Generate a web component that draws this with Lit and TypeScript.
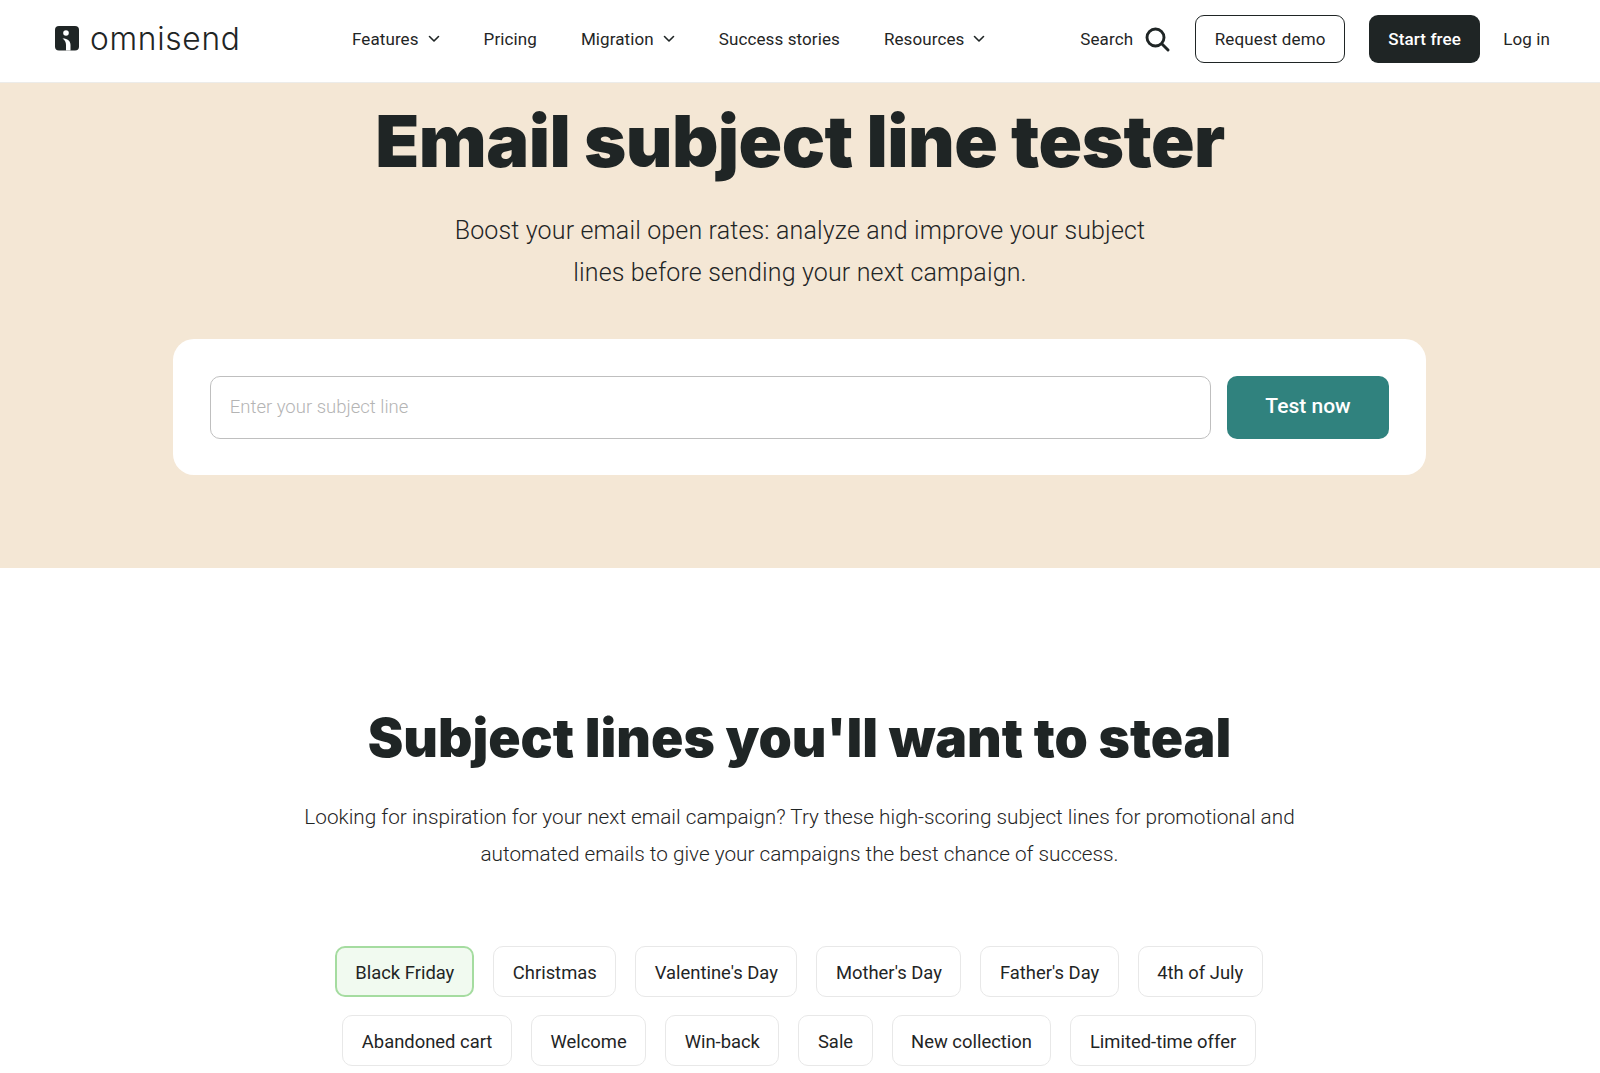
import { LitElement, html, css } from "lit";
import { customElement } from "lit/decorators.js";

const chevron = html`<svg class="chev" width="12" height="8" viewBox="0 0 12 8" fill="none"><path d="M1.500 1.500 6 6l4.500-4.500" stroke="#1f2525" stroke-width="1.600" stroke-linecap="round" stroke-linejoin="round"/></svg>`;

const row1 = ["Christmas", "Valentine's Day", "Mother's Day", "Father's Day", "4th of July"];
const row2 = ["Abandoned cart", "Welcome", "Win-back", "Sale", "New collection", "Limited-time offer"];

@customElement("app-root")
export class AppRoot extends LitElement {
  static styles = css`
    :host { display: block; height: 1073px; overflow: hidden; background: #fff; color: #1f2525; font-family: Roboto, "Liberation Sans", sans-serif; }
    * { box-sizing: border-box; }
    header { height: 83px; display: flex; align-items: center; border-bottom: 1px solid #ececea; background: #fff; padding: 0 50px 5px 55px; }
    .logo { display: flex; align-items: center; gap: 10px; width: 297px; }
    .logo span { font-family: Inter, sans-serif; font-weight: 300; font-size: 31.700px; letter-spacing: 0.700px; line-height: 1; }
    nav { display: flex; align-items: center; gap: 44px; font-size: 17px; letter-spacing: 0.100px; }
    nav a { display: flex; align-items: center; gap: 9px; }
    .right { margin-left: auto; display: flex; align-items: center; font-size: 17px; letter-spacing: 0.120px; }
    .search { display: flex; align-items: center; gap: 11px; margin-right: 25px; }
    .btn { height: 48px; border-radius: 9px; display: flex; align-items: center; justify-content: center; font-weight: 500; }
    .demo { width: 150px; border: 1px solid #1f2525; margin-right: 24px; font-weight: 400; }
    .free { width: 111px; background: #1f2525; color: #fff; margin-right: 23px; }
    .hero { height: 485px; background: #f4e7d5; display: flex; flex-direction: column; align-items: center; }
    h1 { margin: 16px 0 0; font-family: Inter, sans-serif; font-weight: 900; font-size: 72px; line-height: 84px; letter-spacing: -0.560px; }
    .sub { margin: 27px 0 0; font-size: 25px; line-height: 42px; font-weight: 300; letter-spacing: 0.150px; text-align: center; }
    .card { margin: 45px 1.500px 0 0; width: 1253px; height: 136px; background: #fff; border-radius: 21px; padding: 37px; display: flex; gap: 16px; }
    .input { flex: 1; height: 62.500px; border: 1.500px solid #bfbfbf; border-radius: 10px; display: flex; align-items: center; padding-left: 19px; font-size: 18.500px; font-weight: 300; color: #b4b4b4; }
    .test { width: 161.500px; height: 62.500px; padding-bottom: 2px; background: #30827e; color: #fff; border-radius: 10px; display: flex; align-items: center; justify-content: center; font-size: 21px; font-weight: 500; }
    .steal { display: flex; flex-direction: column; align-items: center; padding-right: 1px; }
    h2 { margin: 138px 0 0; font-family: Inter, sans-serif; font-weight: 900; font-size: 53.400px; line-height: 64px; }
    .desc { margin: 29px 0 0; font-size: 20.750px; line-height: 37px; font-weight: 300; text-align: center; }
    .chips { margin: 73px 1px 0 0; display: flex; flex-direction: column; gap: 18px; align-items: center; }
    .row { display: flex; gap: 19px; }
    .chip { height: 51px; padding: 1px 18.500px 0; border: 1.500px solid #e8e8e8; border-radius: 10px; display: flex; align-items: center; font-size: 18.400px; }
    .chip.on { padding: 1px 18px 0; border: 2px solid #a5dca0; background: #f1faf0; }
  `;

  render() {
    return html`
      <header>
        <div class="logo">
          <svg width="25" height="25" viewBox="0 0 25 25"><rect width="24" height="24.500" rx="4" fill="#1f2525"/><circle cx="11" cy="7" r="2.800" fill="#fff"/><path d="M7.500 12.500C12 12.300 15.500 14.500 15.500 19V24.500H11V19C11 16 9.800 14 7.500 12.500Z" fill="#fff"/></svg>
          <span>omnisend</span>
        </div>
        <nav>
          <a>Features ${chevron}</a>
          <a>Pricing</a>
          <a>Migration ${chevron}</a>
          <a>Success stories</a>
          <a>Resources ${chevron}</a>
        </nav>
        <div class="right">
          <div class="search">Search
            <svg width="26" height="26" viewBox="0 0 26 26" fill="none"><circle cx="11.500" cy="11.500" r="8.500" stroke="#1f2525" stroke-width="2.900"/><path d="M18 18l6 6" stroke="#1f2525" stroke-width="2.900" stroke-linecap="round"/></svg>
          </div>
          <div class="btn demo">Request demo</div>
          <div class="btn free">Start free</div>
          <div>Log in</div>
        </div>
      </header>
      <section class="hero">
        <h1>Email subject line tester</h1>
        <p class="sub">Boost your email open rates: analyze and improve your subject<br />lines before sending your next campaign.</p>
        <div class="card">
          <div class="input">Enter your subject line</div>
          <div class="test">Test now</div>
        </div>
      </section>
      <section class="steal">
        <h2>Subject lines you'll want to steal</h2>
        <p class="desc">Looking for inspiration for your next email campaign? Try these high-scoring subject lines for promotional and<br />automated emails to give your campaigns the best chance of success.</p>
        <div class="chips">
          <div class="row"><div class="chip on">Black Friday</div>${row1.map((c) => html`<div class="chip">${c}</div>`)}</div>
          <div class="row">${row2.map((c) => html`<div class="chip">${c}</div>`)}</div>
        </div>
      </section>
    `;
  }
}
